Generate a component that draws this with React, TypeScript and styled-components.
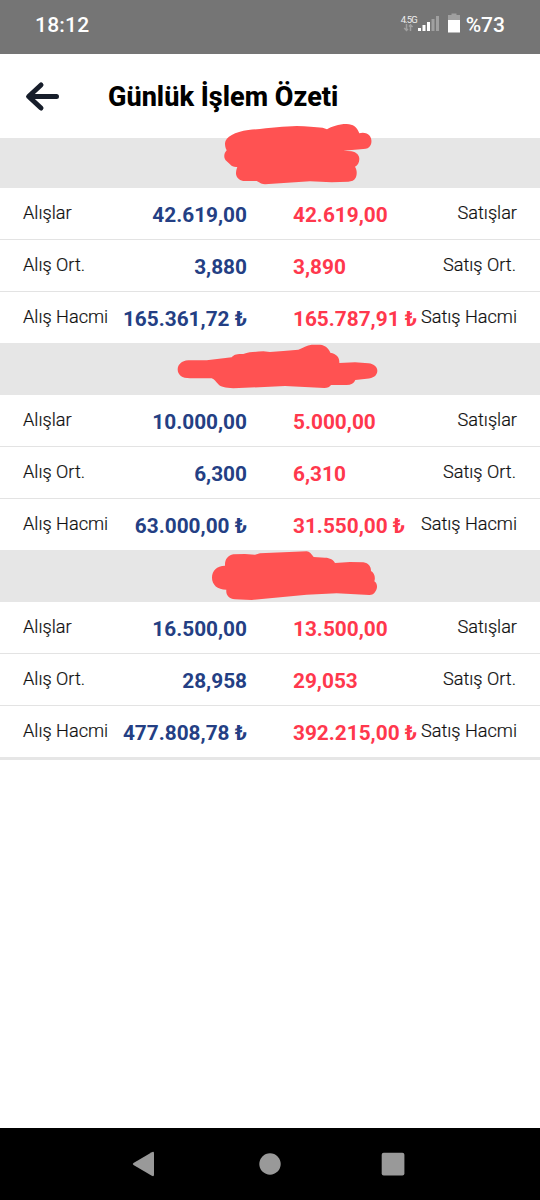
import React from "react";
import styled, { createGlobalStyle } from "styled-components";

const GlobalStyle = createGlobalStyle`
  * { box-sizing: border-box; }
  body { margin: 0; background: #fff; font-family: Roboto, "Liberation Sans", sans-serif; }
`;

const Screen = styled.div`
  width: 540px;
  height: 1200px;
  display: flex;
  flex-direction: column;
  overflow: hidden;
  background: #fff;
`;

const StatusBar = styled.header`
  height: 54px;
  flex: none;
  display: flex;
  justify-content: space-between;
  padding: 0 35px;
  background: #757575;
  color: #fff;
`;

const Clock = styled.span`
  font-size: 21px;
  font-weight: 500;
  line-height: 50px;
  letter-spacing: 0.2px;
`;

const StatusRight = styled.div`
  display: flex;
  align-items: flex-start;
`;

const Network = styled.div`
  width: 17px;
  padding-top: 15px;
`;

const NetworkLabel = styled.div`
  font-size: 9.5px;
  line-height: 9px;
  letter-spacing: -0.9px;
  white-space: nowrap;
  color: #eee;
`;

const DataArrows = styled.svg`
  display: block;
  margin-left: 2px;
`;

const StatusIcons = styled.svg`
  display: block;
  margin-right: 6px;
`;

const Percent = styled.span`
  font-size: 21px;
  font-weight: 500;
  line-height: 50px;
`;

const TitleBar = styled.div`
  height: 84px;
  flex: none;
  display: flex;
  align-items: center;
  padding-left: 24px;
`;

const BackIcon = styled.svg`
  display: block;
  margin-right: 46px;
`;

const Title = styled.h1`
  margin: 2px 0 0;
  font-size: 27px;
  font-weight: 800;
  line-height: 32px;
  letter-spacing: 0.03px;
  color: #000;
`;

const Band = styled.div<{ $height: number }>`
  position: relative;
  flex: none;
  height: ${(p) => p.$height}px;
  background: #e6e6e6;
`;

const Scribble = styled.svg<{ $left: number; $top: number }>`
  position: absolute;
  left: ${(p) => p.$left}px;
  top: ${(p) => p.$top}px;
`;

const Row = styled.div`
  flex: none;
  height: 52px;
  display: grid;
  grid-template-columns: 247px 247px;
  column-gap: 46px;
  border-bottom: 1px solid #e3e3e3;
  &:last-child { height: 51px; border-bottom: 0; }
`;

const Half = styled.div<{ $side: "buy" | "sell" }>`
  display: flex;
  justify-content: space-between;
  white-space: nowrap;
  padding: ${(p) => (p.$side === "buy" ? "0 0 0 23px" : "0 23px 0 0")};
`;

const Label = styled.span<{ $abbreviated?: boolean }>`
  font-size: 18.15px;
  font-weight: 300;
  line-height: 50px;
  color: #111;
  -webkit-text-stroke: 0.2px #111;
  padding-right: ${(p) => (p.$abbreviated ? 1 : 0)}px;
`;

const Value = styled.span<{ $side: "buy" | "sell" }>`
  font-size: 20.8px;
  font-weight: 700;
  line-height: 54px;
  color: ${(p) => (p.$side === "buy" ? "#243f84" : "#ff384d")};
`;

const Spacer = styled.div`
  flex: 1;
`;

const NavBar = styled.nav`
  height: 72px;
  flex: none;
  display: flex;
  justify-content: center;
  background: #000;
`;

type Mark = { left: number; top: number; w: number; h: number; d: string };
type Section = { band: number; mark: Mark; rows: [string, string, string, string][] };

const sections: Section[] = [
  {
    band: 50,
    mark: {
      left: 200, top: -28, w: 200, h: 90,
      d: "M75 100C76 80 105 66 145 60C200 55 250 49 290 48C320 49 345 52 368 53L381 58C395 50 415 42 440 42C460 43 470 50 478 70C490 66 503 70 509 77C515 85 516 97 512 105C507 114 500 117 490 117L430 122L455 124C470 127 478 136 478 147C478 158 473 166 465 170C472 180 471 195 467 203C463 211 455 214 445 215L395 217L330 214L195 223C187 223 180 219 170 213L135 213C120 213 110 205 108 192C108 185 109 178 112 171C102 172 95 169 90 163L77 151C71 143 71 131 80 121C76 114 75 107 75 100Z",
    },
    rows: [
      ["Alışlar", "42.619,00", "42.619,00", "Satışlar"],
      ["Alış Ort.", "3,880", "3,890", "Satış Ort."],
      ["Alış Hacmi", "165.361,72 ₺", "165.787,91 ₺", "Satış Hacmi"],
    ],
  },
  {
    band: 52,
    mark: {
      left: 160, top: -8, w: 240, h: 70,
      d: "M53 103C54 88 64 78 85 76L140 76L215 67C221 59 230 56 250 57C270 50 290 51 310 49L330 51L370 48L415 44C430 38 440 31 455 29L480 29C497 31 507 41 511 53C530 56 539 68 538 84L585 82L625 85C643 87 652 97 652 108C651 122 640 130 620 131L586 135C582 145 573 150 560 150L513 150C509 156 503 159 493 159L375 153L220 160C195 158 182 156 175 148C168 141 164 132 155 130L90 130C66 130 53 120 53 103Z",
    },
    rows: [
      ["Alışlar", "10.000,00", "5.000,00", "Satışlar"],
      ["Alış Ort.", "6,300", "6,310", "Satış Ort."],
      ["Alış Hacmi", "63.000,00 ₺", "31.550,00 ₺", "Satış Hacmi"],
    ],
  },
  {
    band: 52,
    mark: {
      left: 190, top: -10, w: 210, h: 70,
      d: "M66 113C66 93 80 77 105 77C104 58 114 46 130 43L165 42L195 44L210 40L350 34C358 34 365 43 371 51L405 53C420 53 431 60 435 69L480 66L520 67C536 69 543 80 543 93C553 99 557 112 553 124C563 131 563 144 557 153C552 163 546 165 538 165L440 160L350 164L185 180L135 178C117 176 107 166 109 149C82 149 66 134 66 113Z",
    },
    rows: [
      ["Alışlar", "16.500,00", "13.500,00", "Satışlar"],
      ["Alış Ort.", "28,958", "29,053", "Satış Ort."],
      ["Alış Hacmi", "477.808,78 ₺", "392.215,00 ₺", "Satış Hacmi"],
    ],
  },
];

export default function App() {
  return (
    <Screen>
      <GlobalStyle />
      <StatusBar>
        <Clock>18:12</Clock>
        <StatusRight>
          <Network>
            <NetworkLabel>4.5G</NetworkLabel>
            <DataArrows width="11" height="8" viewBox="0 0 11 8" fill="none" stroke="#a0a0a0" strokeWidth="1.5">
              <path d="M3.5 0V6M1.2 4L3.5 6.4L5 5M7.5 7V1M6 2.5L7.5 0.8L9.6 3" />
            </DataArrows>
          </Network>
          <StatusIcons width="42" height="54" viewBox="418 0 42 54">
            <path fill="#fff" d="M418 28h3v3h-3zM422.5 25h3v6h-3zM427 22h3v9h-3z" />
            <path fill="#a0a0a0" d="M431.5 19h3v12h-3zM436 16h3v15h-3z" />
            <path fill="#a0a0a0" d="M448 15h3.500v-1.500h5V15h3.500v5h-12z" />
            <path fill="#fff" d="M448 20h12v12.500h-12z" />
          </StatusIcons>
          <Percent>%73</Percent>
        </StatusRight>
      </StatusBar>
      <TitleBar>
        <BackIcon width="38" height="36" viewBox="0 0 38 36" fill="none" stroke="#171e2b" strokeWidth="5" strokeLinecap="round" strokeLinejoin="round">
          <path d="M32.500 18.500H5M17 7L4.600 18.500L17 30" />
        </BackIcon>
        <Title>Günlük İşlem Özeti</Title>
      </TitleBar>
      {sections.map((s, i) => (
        <section key={i}>
          <Band $height={s.band}>
            <Scribble
              $left={s.mark.left}
              $top={s.mark.top}
              width={s.mark.w}
              height={s.mark.h}
              viewBox={`0 0 ${s.mark.w * 3} ${s.mark.h * 3}`}
            >
              <path fill="#ff5252" d={s.mark.d} />
            </Scribble>
          </Band>
          {s.rows.map(([buyLabel, buy, sell, sellLabel]) => (
            <Row key={buyLabel}>
              <Half $side="buy">
                <Label>{buyLabel}</Label>
                <Value $side="buy">{buy}</Value>
              </Half>
              <Half $side="sell">
                <Value $side="sell">{sell}</Value>
                <Label $abbreviated={sellLabel.endsWith(".")}>{sellLabel}</Label>
              </Half>
            </Row>
          ))}
        </section>
      ))}
      <Band $height={3} />
      <Spacer />
      <NavBar>
        <svg width="540" height="72" viewBox="0 0 540 72" fill="#999">
          <path d="M133.500 35L151.800 24.200Q154 23 154 25.200V46.800Q154 49 151.800 47.800L133.500 37Q132 36 133.500 35Z" />
          <circle cx="270" cy="36" r="10.700" />
          <rect x="381.700" y="24.700" width="22.700" height="22.700" rx="2" />
        </svg>
      </NavBar>
    </Screen>
  );
}
